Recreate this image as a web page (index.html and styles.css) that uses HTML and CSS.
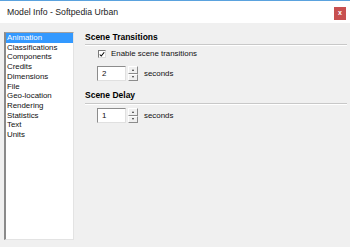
FILE: index.html
```html
<!DOCTYPE html>
<html lang="en">
<head>
    <meta charset="UTF-8">
    <title>Model Info - Softpedia Urban</title>
    <link rel="stylesheet" href="styles.css">
</head>
<body>
    <div class="window">
        <div class="titlebar">
            <span class="title">Model Info - Softpedia Urban</span>
            <span class="close">x</span>
        </div>
        <div class="content">
            <ul class="list">
                <li class="selected">Animation</li>
                <li>Classifications</li>
                <li>Components</li>
                <li>Credits</li>
                <li>Dimensions</li>
                <li>File</li>
                <li>Geo-location</li>
                <li>Rendering</li>
                <li>Statistics</li>
                <li>Text</li>
                <li>Units</li>
            </ul>
            <div class="panel">
                <div class="heading">Scene Transitions</div>
                <label class="check-row">
                    <span class="checkbox">
                        <svg width="8" height="8" viewBox="0 0 8 8"><path d="M1 4 L3 6 L7 1" fill="none" stroke="#000" stroke-width="1.4"/></svg>
                    </span>
                    Enable scene transitions
                </label>
                <div class="spin-row">
                    <span class="spin-input">2</span>
                    <span class="spin-buttons">
                        <span class="spin-btn"><i class="arrow up"></i></span>
                        <span class="spin-btn"><i class="arrow down"></i></span>
                    </span>
                    <span class="unit">seconds</span>
                </div>
                <div class="heading second">Scene Delay</div>
                <div class="spin-row delay">
                    <span class="spin-input">1</span>
                    <span class="spin-buttons">
                        <span class="spin-btn"><i class="arrow up"></i></span>
                        <span class="spin-btn"><i class="arrow down"></i></span>
                    </span>
                    <span class="unit">seconds</span>
                </div>
            </div>
        </div>
    </div>
</body>
</html>
```

FILE: styles.css
```css
body {
    margin: 0;
    padding: 0;
    font-family: 'Liberation Sans', Arial, sans-serif;
    background: #f0f0f0;
    width: 350px;
    height: 247px;
    overflow: hidden;
}

.window {
    height: 247px;
    border-top: 1px solid #5aa2de;
    box-sizing: border-box;
}

.titlebar {
    height: 22px;
    background: #ffffff;
    display: flex;
    align-items: center;
    justify-content: space-between;
    padding-left: 7px;
    padding-right: 4px;
}

.title {
    font-size: 8.7px;
    color: #222;
}

.close {
    width: 12px;
    height: 13px;
    margin-top: 2px;
    background: #c75050;
    color: #fff;
    font-size: 7px;
    font-weight: bold;
    line-height: 12px;
    text-align: center;
}

.content {
    display: flex;
    padding-left: 4px;
    padding-top: 9px;
}

/* list on the left */
.list {
    list-style: none;
    margin: 0;
    padding: 0;
    width: 70px;
    height: 208px;
    box-sizing: border-box;
    background: #fff;
    border-top: 1px solid #a0a0a0;
    border-left: 2px solid #8a8a8a;
    border-right: 1px solid #e3e3e3;
    border-bottom: 1px solid #e3e3e3;
    font-size: 7.9px;
    line-height: 9.7px;
    color: #111;
}

.list li {
    padding-left: 1px;
}

.list li.selected {
    background: #3399ff;
    color: #fff;
}

/* right side */
.panel {
    flex: 1;
    margin-left: 11px;
    margin-right: 3px;
    font-size: 7.9px;
    color: #111;
}

.heading {
    font-weight: bold;
    font-size: 8.5px;
    line-height: 10px;
    padding-bottom: 2px;
    border-bottom: 1px solid #c8c8c8;
    box-shadow: 0 1px 0 #fff;
    color: #000;
}

.heading.second {
    margin-top: 9px;
    padding-bottom: 3px;
}

.check-row {
    display: flex;
    align-items: center;
    margin-top: 4px;
    margin-left: 13px;
    line-height: 10px;
}

.checkbox {
    width: 8px;
    height: 8px;
    box-sizing: border-box;
    background: #fff;
    border: 1px solid #7a7a7a;
    border-right-color: #dcdcdc;
    border-bottom-color: #dcdcdc;
    margin-right: 5px;
    display: flex;
    align-items: center;
    justify-content: center;
}

.checkbox svg {
    width: 7px;
    height: 7px;
}

.spin-row {
    display: flex;
    align-items: center;
    margin-top: 7px;
    margin-left: 12px;
}

.spin-row.delay {
    margin-top: 4px;
}

.spin-input {
    width: 29px;
    height: 15px;
    box-sizing: border-box;
    background: #fff;
    border: 1px solid #8c8c8c;
    border-right-color: #e0e0e0;
    border-bottom-color: #e0e0e0;
    padding-left: 4px;
    line-height: 13px;
}

.spin-buttons {
    display: flex;
    flex-direction: column;
    margin-left: 2px;
    width: 10px;
    height: 15px;
}

.spin-btn {
    flex: 1;
    box-sizing: border-box;
    background: #f0f0f0;
    border: 1px solid #fff;
    border-right-color: #8c8c8c;
    border-bottom-color: #8c8c8c;
    display: flex;
    align-items: center;
    justify-content: center;
}

.arrow {
    width: 0;
    height: 0;
    border-left: 1.5px solid transparent;
    border-right: 1.5px solid transparent;
}

.arrow.up {
    border-bottom: 2px solid #333;
}

.arrow.down {
    border-top: 2px solid #333;
}

.unit {
    margin-left: 6px;
}
```
